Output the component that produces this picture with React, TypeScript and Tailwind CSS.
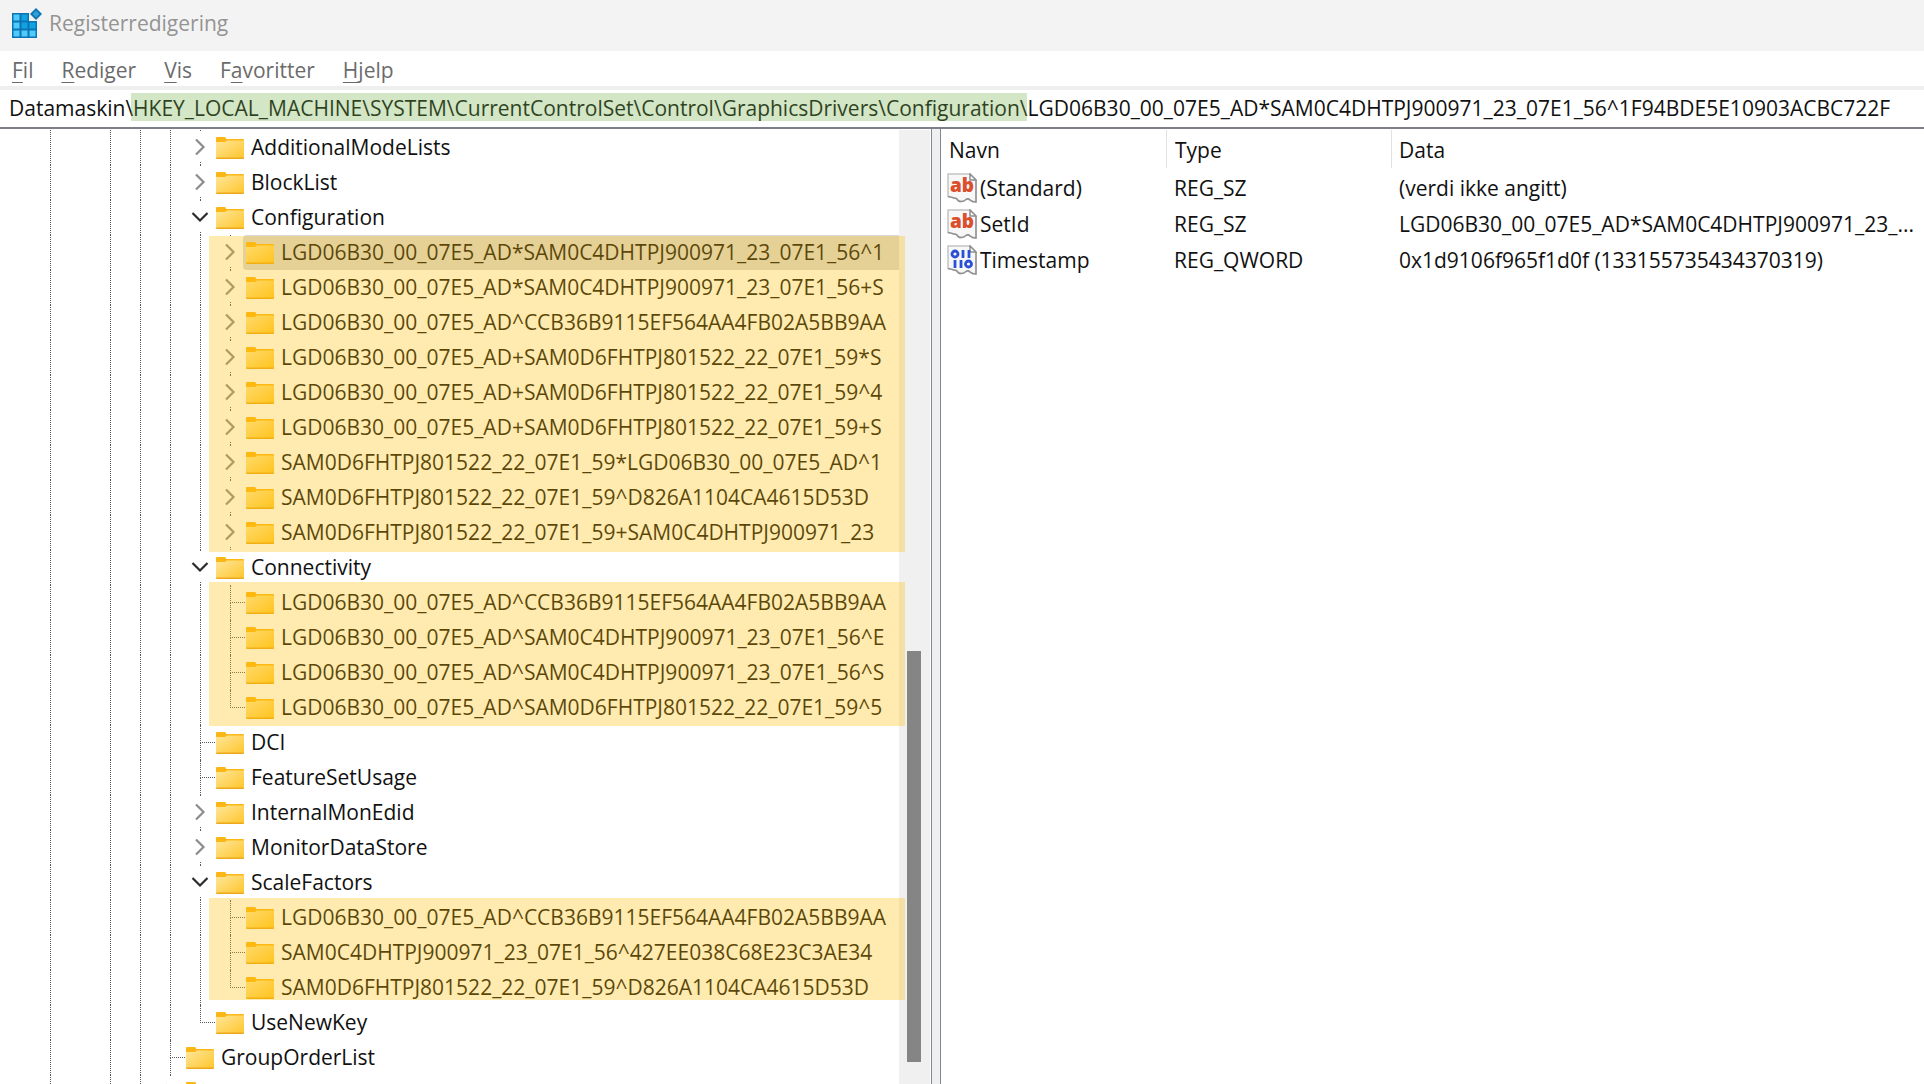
import React from "react";

type Kind = "closed" | "open" | "leaf" | "last";
type Node = { name: string; kind: Kind };
type Branch = { node: Node; children?: Node[]; band?: string };

const BRANCHES: Branch[] = [
  { node: { name: "AdditionalModeLists", kind: "closed" } },
  { node: { name: "BlockList", kind: "closed" } },
  {
    node: { name: "Configuration", kind: "open" },
    band: "top-px -bottom-0.5",
    children: [
      { name: "LGD06B30_00_07E5_AD*SAM0C4DHTPJ900971_23_07E1_56^1", kind: "closed" },
      { name: "LGD06B30_00_07E5_AD*SAM0C4DHTPJ900971_23_07E1_56+S", kind: "closed" },
      { name: "LGD06B30_00_07E5_AD^CCB36B9115EF564AA4FB02A5BB9AA", kind: "closed" },
      { name: "LGD06B30_00_07E5_AD+SAM0D6FHTPJ801522_22_07E1_59*S", kind: "closed" },
      { name: "LGD06B30_00_07E5_AD+SAM0D6FHTPJ801522_22_07E1_59^4", kind: "closed" },
      { name: "LGD06B30_00_07E5_AD+SAM0D6FHTPJ801522_22_07E1_59+S", kind: "closed" },
      { name: "SAM0D6FHTPJ801522_22_07E1_59*LGD06B30_00_07E5_AD^1", kind: "closed" },
      { name: "SAM0D6FHTPJ801522_22_07E1_59^D826A1104CA4615D53D", kind: "closed" },
      { name: "SAM0D6FHTPJ801522_22_07E1_59+SAM0C4DHTPJ900971_23", kind: "closed" },
    ],
  },
  {
    node: { name: "Connectivity", kind: "open" },
    band: "-top-[3px] -bottom-px",
    children: [
      { name: "LGD06B30_00_07E5_AD^CCB36B9115EF564AA4FB02A5BB9AA", kind: "leaf" },
      { name: "LGD06B30_00_07E5_AD^SAM0C4DHTPJ900971_23_07E1_56^E", kind: "leaf" },
      { name: "LGD06B30_00_07E5_AD^SAM0C4DHTPJ900971_23_07E1_56^S", kind: "leaf" },
      { name: "LGD06B30_00_07E5_AD^SAM0D6FHTPJ801522_22_07E1_59^5", kind: "last" },
    ],
  },
  { node: { name: "DCI", kind: "leaf" } },
  { node: { name: "FeatureSetUsage", kind: "leaf" } },
  { node: { name: "InternalMonEdid", kind: "closed" } },
  { node: { name: "MonitorDataStore", kind: "closed" } },
  {
    node: { name: "ScaleFactors", kind: "open" },
    band: "-top-0.5 bottom-[5px]",
    children: [
      { name: "LGD06B30_00_07E5_AD^CCB36B9115EF564AA4FB02A5BB9AA", kind: "leaf" },
      { name: "SAM0C4DHTPJ900971_23_07E1_56^427EE038C68E23C3AE34", kind: "leaf" },
      { name: "SAM0D6FHTPJ801522_22_07E1_59^D826A1104CA4615D53D", kind: "last" },
    ],
  },
  { node: { name: "UseNewKey", kind: "last" } },
];

const LINE = "border-[#5a5a5a] border-dotted";

function Guide({ line = true }: { line?: boolean }) {
  return (
    <span className="flex w-[30px] shrink-0 self-stretch pl-[15px]">
      {line && <span className={`border-l ${LINE}`} />}
    </span>
  );
}

function Folder() {
  return (
    <svg width="28" height="22" viewBox="0 0 28 22" className="ml-px shrink-0" aria-hidden="true">
      <defs>
        <linearGradient id="folder" x1="0" y1="0" x2="1" y2="1">
          <stop offset="0" stopColor="#ffe69b" />
          <stop offset="1" stopColor="#ffc62b" />
        </linearGradient>
      </defs>
      <path d="M0 1Q0 0 1 0H8.500Q9.500 0 10 1V2H27Q28 2 28 3V6H0Z" fill="#fcb716" />
      <path d="M0 5H9L11 3.500H28V21Q28 21.500 27 21.500H1Q0 21.500 0 20.500Z" fill="url(#folder)" />
      <path d="M0 20.500H28V21Q28 22 27 22H1Q0 22 0 20.500Z" fill="#eda81c" />
    </svg>
  );
}

function Connector({ kind, name }: { kind: Kind; name: string }) {
  if (kind === "leaf" || kind === "last") {
    return (
      <span className="flex w-[30px] shrink-0 flex-col self-stretch pl-[15px]">
        <span className={`h-[18px] border-b border-l ${LINE}`} />
        {kind === "leaf" && <span className={`flex-1 border-l ${LINE}`} />}
      </span>
    );
  }
  return (
    <button
      type="button"
      aria-label={name}
      aria-expanded={kind === "open"}
      className="flex w-[30px] shrink-0 flex-col items-center justify-between self-stretch"
    >
      <span className={`ml-px h-px border-l ${LINE}`} />
      {kind === "open" ? (
        <svg width="18" height="12" viewBox="0 0 18 12" fill="none" stroke="#2b2b2b" strokeWidth="2.200" aria-hidden="true">
          <path d="M1.500 2L9 9.500L16.500 2" />
        </svg>
      ) : (
        <svg width="12" height="18" viewBox="0 0 12 18" fill="none" stroke="#8c8c8c" strokeWidth="2.200" aria-hidden="true">
          <path d="M2 1.500L9.500 9L2 16.500" />
        </svg>
      )}
      <span className={`ml-px h-[3px] border-l ${LINE}`} />
    </button>
  );
}

function Label({ name }: { name: string }) {
  return <span className="pb-0.5 pl-[7px]">{name}</span>;
}

function Row({ node, depth, selected }: { node: Node; depth: number; selected?: boolean }) {
  return (
    <div
      role="treeitem"
      aria-selected={!!selected}
      className="flex h-[35px] items-center overflow-hidden pl-[35px] whitespace-nowrap"
    >
      <Guide />
      <Guide line={false} />
      <Guide />
      <Guide />
      {depth > 0 && <Guide />}
      {depth > 1 && <Guide />}
      <Connector kind={node.kind} name={node.name} />
      {selected ? (
        <span className="-ml-0.5 flex h-full flex-1 items-center rounded-l-sm bg-[#d9d9d9] pl-0.5">
          <Folder />
          <Label name={node.name} />
        </span>
      ) : (
        <>
          <Folder />
          <Label name={node.name} />
        </>
      )}
    </div>
  );
}

function Tree() {
  return (
    <div role="tree" className="min-w-0 flex-1 pt-px">
      {BRANCHES.map((b) => (
        <React.Fragment key={b.node.name}>
          <Row node={b.node} depth={1} />
          {b.children && (
            <div role="group" className="relative">
              {b.children.map((c, i) => (
                <Row key={c.name} node={c} depth={2} selected={b.node.name === "Configuration" && i === 0} />
              ))}
              <div className={`pointer-events-none absolute -right-1.5 left-[209px] bg-[#ffc000]/31 ${b.band}`} />
            </div>
          )}
        </React.Fragment>
      ))}
      <Row node={{ name: "GroupOrderList", kind: "leaf" }} depth={0} />
      <Row node={{ name: "", kind: "closed" }} depth={0} />
    </div>
  );
}

function AppIcon() {
  const light = "#4fcbfa";
  const mid = "#0fa3e2";
  const cells = [
    [light, mid, mid],
    [light, mid, mid],
    [light, light, light],
  ];
  return (
    <svg width="30" height="30" viewBox="0 0 30 30" aria-hidden="true">
      <path d="M0 5H17V13H25V30H0Z" fill="#0c73b4" />
      {cells.map((row, y) =>
        row.map((c, x) =>
          y === 0 && x === 2 ? null : (
            <rect key={`${x}${y}`} x={1.5 + x * 8} y={6.5 + y * 8} width="6" height="6" fill={c} />
          ),
        ),
      )}
      <path d="M24 0L30 6L24 12L18 6Z" fill="#0c73b4" />
      <path d="M24 2.500L27.500 6L24 9.500L20.500 6Z" fill="#2f9fd8" />
    </svg>
  );
}

function ValueIcon({ binary }: { binary?: boolean }) {
  return (
    <svg width="30" height="30" viewBox="0 0 30 30" className="shrink-0" aria-hidden="true">
      <path
        d="M1 1H23L29 7V29Q25 29 23 27Q21 25 19 26.500Q15 30 11 27.500Q10 25 7 25Q4 24 1 23.500Z"
        fill="#f7f7f7"
        stroke="#c4c4c4"
        strokeWidth="1.500"
      />
      <path d="M29 7V29Q25 29 23 27Q21 25 19 26.500Q15 30 11 27.500Q10 25 7 25Q4 24 1 23.500" fill="none" stroke="#929292" strokeWidth="1.500" />
      <path d="M23 1V7H29Z" fill="#fff" stroke="#8f8f8f" strokeWidth="1.500" />
      {binary ? (
        <g fill="none" stroke="#2b50d8" strokeWidth="2.800">
          <circle cx="8" cy="9" r="3" />
          <path d="M16 5V13M22 5V13M8 15V23M14 15V23" />
          <circle cx="21.500" cy="19" r="3" />
        </g>
      ) : (
        <text x="3" y="19" fontFamily="Open Sans" fontWeight="800" fontSize="19" fill="#dc4f2c">
          ab
        </text>
      )}
    </svg>
  );
}

const VALUES = [
  { name: "(Standard)", type: "REG_SZ", data: "(verdi ikke angitt)" },
  { name: "SetId", type: "REG_SZ", data: "LGD06B30_00_07E5_AD*SAM0C4DHTPJ900971_23_..." },
  { name: "Timestamp", type: "REG_QWORD", data: "0x1d9106f965f1d0f (133155735434370319)", binary: true },
];

const MENU = [
  ["", "F", "il"],
  ["", "R", "ediger"],
  ["", "V", "is"],
  ["F", "a", "voritter"],
  ["", "H", "jelp"],
];

export default function App() {
  return (
    <div className="flex h-screen flex-col overflow-hidden bg-white font-['Open_Sans','Noto_Sans',sans-serif] text-[21px] leading-[30px] text-[#111]">
      <header className="flex h-[51px] shrink-0 items-center gap-[7px] bg-[#f3f3f3] pb-1.5 pl-3 text-[#949494]">
        <AppIcon />
        <h1>Registerredigering</h1>
      </header>
      <nav className="flex h-[35px] shrink-0 items-center gap-7 pt-0.5 pl-3 text-[#6b6b6b]">
        {MENU.map(([a, u, z]) => (
          <button key={u} type="button">
            {a}
            <span className="underline decoration-1 underline-offset-4">{u}</span>
            {z}
          </button>
        ))}
      </nav>
      <div className="relative h-[43px] shrink-0 border-t-4 border-b-2 border-t-[#efefef] border-b-[#7d7f88]">
        <input
          aria-label="Adresse"
          className="h-full w-full pb-px pl-[9px] outline-none"
          defaultValue="Datamaskin\HKEY_LOCAL_MACHINE\SYSTEM\CurrentControlSet\Control\GraphicsDrivers\Configuration\LGD06B30_00_07E5_AD*SAM0C4DHTPJ900971_23_07E1_56^1F94BDE5E10903ACBC722F"
        />
        <div className="pointer-events-none absolute top-[3px] left-[131px] h-7 w-[896px] bg-[#70ad47]/31" />
      </div>
      <main className="grid min-h-0 flex-1 grid-cols-[932fr_8px_984fr] grid-rows-[minmax(0,1fr)]">
        <section className="flex min-w-0 border-r border-[#828790] pr-px">
          <Tree />
          <div className="mt-px flex w-[31px] shrink-0 flex-col bg-[#f0f0f0] px-2">
            <div className="flex-[521]" />
            <div className="mr-px flex-[411] bg-[#858585]" />
            <div className="flex-[22]" />
          </div>
        </section>
        <div className="bg-[#f0f0f0]" />
        <section className="min-w-0 border-l border-[#828790]">
          <table className="w-full table-fixed border-collapse text-left">
            <colgroup>
              <col className="w-[226px]" />
              <col className="w-[225px]" />
              <col />
            </colgroup>
            <thead>
              <tr className="h-[41px]">
                {["Navn", "Type", "Data"].map((h, i) => (
                  <th key={h} className="p-0 align-top font-normal">
                    <div className={i < 2 ? "mt-px h-[38px] border-r border-[#e2e2e2] pt-[5px] pl-2" : "mt-px pt-[5px] pl-[7px]"}>{h}</div>
                  </th>
                ))}
              </tr>
            </thead>
            <tbody>
              {VALUES.map((v) => (
                <tr key={v.name} className="h-9">
                  <td className="p-0 pl-[6px]">
                    <span className="flex items-center gap-[3px]">
                      <ValueIcon binary={v.binary} />
                      {v.name}
                    </span>
                  </td>
                  <td className="p-0 pl-[7px]">{v.type}</td>
                  <td className="truncate p-0 pl-[7px]">{v.data}</td>
                </tr>
              ))}
            </tbody>
          </table>
        </section>
      </main>
    </div>
  );
}
